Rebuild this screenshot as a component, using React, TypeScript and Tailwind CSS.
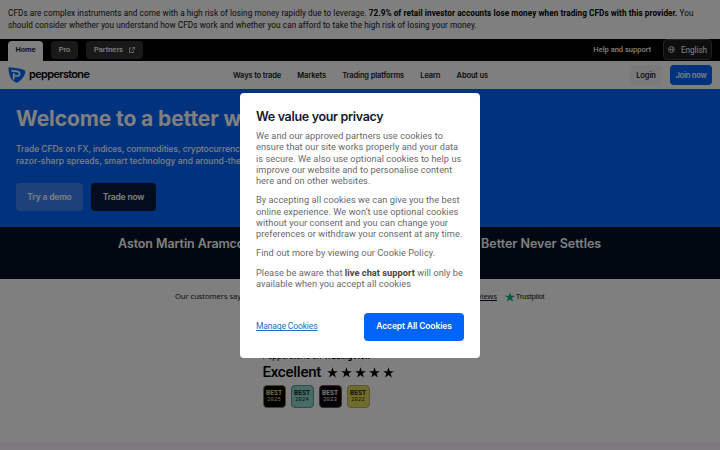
import React from "react";

const jakarta = "font-['Inter','Liberation_Sans',sans-serif]";

function Star({ className }: { className: string }) {
  return (
    <svg viewBox="0 0 24 24" className={className} fill="currentColor">
      <path d="M12 .6l2.800 8.500h9l-7.300 5.300 2.800 8.600-7.300-5.300L4.700 23l2.800-8.600L.2 9.100h9z" />
    </svg>
  );
}

function Logo() {
  return (
    <svg viewBox="0 0 54 48" className="h-4 w-[18px] shrink-0">
      <path d="M4 1C20 4 34 4 47 8c5 2 6 7 4 12-5 13-14 22-24 27C13 43 5 32 3 17 2 9 0 1 4 1z" fill="#0064fa" />
      <path d="M10 11c8 2 15 1 20 3 7 2 6 13-3 13h-8" fill="none" stroke="#fff" strokeWidth="5" />
      <path d="M15 19h6l-2 21-5-4z" fill="#fff" />
    </svg>
  );
}

function Award({ year, className }: { year: string; className: string }) {
  return (
    <div className={`flex h-[23px] w-[23px] flex-col items-center justify-center rounded-[4px] border ${className}`}>
      <span className="text-[6.500px] leading-[7px] font-bold">BEST</span>
      <span className="font-['Liberation_Mono',monospace] text-[5.500px] leading-[6px] tracking-[0.1px]">{year}</span>
    </div>
  );
}

function TopBar() {
  return (
    <div className="flex h-[22px] items-start justify-between bg-black pr-2 pl-2 text-[7.500px] font-medium text-white">
      <div className="flex gap-2 pt-[2px]">
        <div className="flex h-5 w-[35px] items-start justify-center rounded-t-[4px] bg-white pt-[3px] leading-[11px] font-semibold text-[#101828]">Home</div>
        <div className="flex h-[18px] w-[27px] items-center justify-center rounded-[4px] bg-[#333] pb-px">Pro</div>
        <div className="flex h-[18px] w-[57px] items-center justify-center gap-[6px] rounded-[4px] bg-[#333] pb-px">
          Partners
          <svg viewBox="0 0 12 12" className="h-[6px] w-[6px]" fill="none" stroke="currentColor" strokeWidth="1.400">
            <path d="M5 2H1v9h8V7M7 1h4v4M11 1L5 7" />
          </svg>
        </div>
      </div>
      <div className="flex gap-[12px]">
        <span className="pt-[5px] leading-[11px]">Help and support</span>
        <div className="flex h-[21px] w-[49px] items-center justify-center gap-[6px] rounded-[4px] border border-[#444] bg-[#1c1c1c]">
          <svg viewBox="0 0 14 14" className="h-[7px] w-[7px]" fill="none" stroke="#ccc" strokeWidth="1.600">
            <circle cx="7" cy="7" r="6" />
            <ellipse cx="7" cy="7" rx="2.500" ry="6" />
            <path d="M1 7h12" />
          </svg>
          <span className="pt-px text-[8.200px] font-normal tracking-[-0.08px]">English</span>
        </div>
      </div>
    </div>
  );
}

function Nav() {
  return (
    <div className={`flex h-[28px] items-center justify-between bg-white px-2 text-[7.500px] font-semibold text-[#101828] ${jakarta}`}>
      <div className="flex w-[225px] items-center gap-[3px]">
        <Logo />
        <span className="pb-[3px] text-[11px] leading-[14px] font-semibold tracking-[-0.680px] text-black">pepperstone</span>
      </div>
      <div className="flex flex-1 gap-[16.300px] pt-px tracking-[-0.140px] whitespace-nowrap">
        <span>Ways to trade</span>
        <span>Markets</span>
        <span>Trading platforms</span>
        <span>Learn</span>
        <span>About us</span>
      </div>
      <div className="flex gap-2">
        <div className="flex h-5 w-[32px] items-center justify-center rounded-[4px] bg-[#f5f5f5] pt-px tracking-[-0.1px]">Login</div>
        <div className="flex h-5 w-[42px] items-center justify-center rounded-[4px] bg-[#0064fa] pt-px tracking-[-0.2px] text-white">Join now</div>
      </div>
    </div>
  );
}

function Hero() {
  return (
    <div className={`h-[138px] bg-[#0064fa] px-4 pt-4 text-white ${jakarta}`}>
      <h1 className="text-[21px] leading-[28px] font-bold tracking-[-0.100px] whitespace-nowrap">Welcome to a better w</h1>
      <p className="mt-[10px] text-[8.500px] leading-[12px] font-medium tracking-[-0.060px] whitespace-nowrap">
        Trade CFDs on FX, indices, commodities, cryptocurrenci
        <br />
        <span className="tracking-[0.020px]">razor-sharp spreads, smart technology and around-the-</span>
      </p>
      <div className="mt-[16px] flex gap-2 text-[8.500px] font-semibold tracking-[-0.170px]">
        <div className="flex h-[28px] w-[67px] items-center justify-center rounded-[4px] bg-[#3b83f4]">Try a demo</div>
        <div className="flex h-[28px] w-[65px] items-center justify-center rounded-[4px] bg-[#061a3a]">Trade now</div>
      </div>
    </div>
  );
}

function Reviews() {
  return (
    <div className="h-[171px] bg-white text-[#101828]">
      <div className="flex h-[36px] items-center pl-[175px] text-[7.500px]">
        <span className="w-[279px] font-['Noto_Sans',sans-serif] whitespace-nowrap">Our customers say</span>
        <span className="w-[43px] text-right font-['Noto_Sans',sans-serif] underline">reviews</span>
        <Star className="ml-[8px] h-[10px] w-[10px] text-[#00b67a]" />
        <span className="ml-px pt-px font-['Liberation_Sans',sans-serif] text-[7px] text-black">Trustpilot</span>
      </div>
      <div className="pt-[35px] pl-[262.500px] text-black">
        <div className="text-[8.500px] leading-[13px] tracking-[-0.05px] whitespace-nowrap">
          Pepperstone on <b>TradingView</b>
        </div>
        <div className="flex items-center text-[15px] leading-[18px] font-medium">
          <span className="w-[64px] tracking-[-0.250px]">Excellent</span>
          <div className="flex gap-[3px]">
            <Star className="h-[11px] w-[11px]" />
            <Star className="h-[11px] w-[11px]" />
            <Star className="h-[11px] w-[11px]" />
            <Star className="h-[11px] w-[11px]" />
            <Star className="h-[11px] w-[11px]" />
          </div>
        </div>
        <div className="mt-[4px] flex gap-[5px]">
          <Award year="2025" className="border-[#8c8950] bg-black text-[#e4df92]" />
          <Award year="2024" className="border-[#5d9990] bg-[#8fd9cb] text-[#102824]" />
          <Award year="2023" className="border-[#73505d] bg-[#08040a] text-[#eee]" />
          <Award year="2022" className="border-[#b5a860] bg-[#e0d853] text-[#242410]" />
        </div>
      </div>
    </div>
  );
}

function CookieDialog() {
  return (
    <div className="absolute top-[92.500px] left-[240px] h-[265px] w-[240px] rounded-[4px] bg-white px-4 pt-[15px] text-[9.200px] leading-[11.250px] tracking-[0.060px] whitespace-nowrap text-[#696969]">
      <h2 className={`text-[12.500px] leading-[18px] font-semibold tracking-[-0.320px] text-[#14192d] ${jakarta}`}>We value your privacy</h2>
      <p className="mt-[4.500px]">
        We and our approved partners use cookies to<br />
        ensure that our site works properly and your data<br />
        is secure. We also use optional cookies to help us<br />
        improve our website and to personalise content<br />
        here and on other websites.
      </p>
      <p className="mt-2">
        By accepting all cookies we can give you the best<br />
        online experience. We won’t use optional cookies<br />
        without your consent and you can change your<br />
        preferences or withdraw your consent at any time.
      </p>
      <p className="mt-2">Find out more by viewing our Cookie Policy.</p>
      <p className="mt-2">
        Please be aware that <b className="text-[#444]">live chat support</b> will only be<br />
        available when you accept all cookies
      </p>
      <div className="mt-[24px] flex items-center justify-between">
        <span className="text-[8.500px] tracking-[-0.130px] text-[#1c6fc4] underline">Manage Cookies</span>
        <div className={`flex h-[28px] w-[100px] items-center justify-center rounded-[4px] bg-[#0064fa] text-[8.500px] font-semibold tracking-[-0.120px] text-white ${jakarta}`}>Accept All Cookies</div>
      </div>
    </div>
  );
}

export default function App() {
  return (
    <div className="relative h-[450px] w-[720px] overflow-hidden bg-white font-['Roboto','Liberation_Sans',sans-serif]">
      <div className="h-[39px] bg-white pt-[8px] pl-2 text-[8.200px] leading-[11.500px] tracking-[0.065px] whitespace-nowrap text-[#101010]">
        CFDs are complex instruments and come with a high risk of losing money rapidly due to leverage. <b className="text-black">72.9% of retail investor accounts lose money when trading CFDs with this provider.</b> You
        <br />
        should consider whether you understand how CFDs work and whether you can afford to take the high risk of losing your money.
      </div>
      <TopBar />
      <Nav />
      <Hero />
      <div className={`flex h-[52px] bg-[#001022] pt-[8px] pl-[118px] text-[12.500px] leading-[18px] font-semibold whitespace-nowrap text-white ${jakarta}`}>
        <span className="w-[363px] tracking-[-0.100px]">Aston Martin Aramco</span>
        <span>Better Never Settles</span>
      </div>
      <Reviews />
      <div className="absolute inset-x-0 bottom-0 h-2 bg-[#f8f2ff]" />
      <div className="absolute inset-0 bg-black/50" />
      <CookieDialog />
    </div>
  );
}
